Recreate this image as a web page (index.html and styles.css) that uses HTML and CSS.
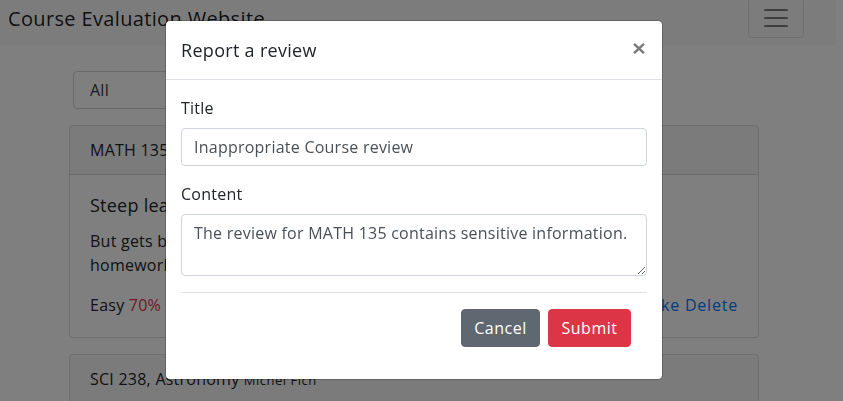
FILE: index.html
```html
<!DOCTYPE html>
<html lang="en">
<head>
<meta charset="utf-8">
<title>Course Evaluation Website</title>
<link rel="stylesheet" href="styles.css">
</head>
<body>
<nav class="navbar">
  <span class="brand">Course Evaluation Website</span>
  <button class="toggler" type="button" aria-label="Toggle navigation">
    <svg class="toggler-icon" width="30" height="30" viewBox="0 0 30 30"><path d="M4 7h22M4 15h22M4 23h22" stroke="rgba(0,0,0,0.5)" stroke-width="2" stroke-linecap="round" fill="none"/></svg>
  </button>
</nav>

<main class="page">
  <select class="filter"><option>All</option></select>

  <div class="card">
    <div class="card-header">MATH 135, Algebra for Honours Mathematics <small class="prof">Ross Willard</small></div>
    <div class="card-body">
      <h5 class="card-title">Steep learning curve</h5>
      <p class="card-text">But gets better after the first few weeks, as long as you keep up<br>homework every week.</p>
      <div class="meta">
        <span>Easy <span class="pct">70%</span></span>
        <span class="links"><a href="#" class="link">Like</a> <a href="#" class="link">Delete</a></span>
      </div>
    </div>
  </div>

  <div class="card">
    <div class="card-header">SCI 238, Astronomy <small class="prof">Michel Fich</small></div>
    <div class="card-body">
      <h5 class="card-title">Interesting course</h5>
    </div>
  </div>
</main>

<div class="backdrop"></div>

<div class="modal" role="dialog">
  <div class="modal-header">
    <h5 class="modal-title">Report a review</h5>
    <button class="close" type="button" aria-label="Close">
      <svg width="12" height="11" viewBox="0 0 12 11"><path d="M1 0.8L11 10.2M11 0.8L1 10.2" stroke="#7b7b7b" stroke-width="2.4" fill="none"/></svg>
    </button>
  </div>
  <form class="modal-body">
    <div class="form-group">
      <label class="label">Title</label>
      <input class="input" type="text" value="Inappropriate Course review">
    </div>
    <div class="form-group">
      <label class="label">Content</label>
      <textarea class="input textarea" rows="2">The review for MATH 135 contains sensitive information.</textarea>
    </div>
    <div class="modal-footer">
      <button type="button" class="btn btn-secondary">Cancel</button>
      <button type="button" class="btn btn-danger">Submit</button>
    </div>
  </form>
</div>
</body>
</html>
```

FILE: styles.css
```css
html, body {
  margin: 0;
  height: 100%;
}

body {
  font-family: "Open Sans", "Noto Sans", sans-serif;
  font-size: 16px;
  line-height: 1.5;
  color: #212529;
  background: #fff;
  letter-spacing: 0.24px;
  overflow: hidden;
}

/* Navbar */
.navbar {
  width: 836px;
  height: 46px;
  box-sizing: border-box;
  background: #f8f9fa;
  display: flex;
  justify-content: space-between;
  align-items: flex-start;
  padding: 0 32px 0 8px;
}

.brand {
  font-size: 20px;
  line-height: 28px;
  padding-top: 5px;
  letter-spacing: 0.35px;
  color: rgba(0, 0, 0, 0.9);
}

.toggler {
  width: 56px;
  height: 40px;
  margin-top: -2px;
  padding: 0;
  border: 1px solid rgba(0, 0, 0, 0.1);
  border-radius: 4px;
  background: transparent;
  display: flex;
  align-items: center;
  justify-content: center;
}

.toggler-icon {
  display: block;
}

/* Page content */
.page {
  width: 690px;
  margin-left: 69px;
  padding-top: 25px;
}

.filter {
  display: block;
  width: 300px;
  height: 38px;
  margin: 0 0 16px 4px;
  padding: 0 16px;
  font: inherit;
  letter-spacing: inherit;
  color: #343a40;
  background: #fff;
  border: 1px solid #ced4da;
  border-radius: 4px;
  appearance: none;
  -webkit-appearance: none;
}

.card {
  background: #fff;
  border: 1px solid rgba(0, 0, 0, 0.125);
  border-radius: 4px;
  margin-bottom: 16px;
}

.card-header {
  padding: 12px 20px;
  background: rgba(0, 0, 0, 0.03);
  border-bottom: 1px solid rgba(0, 0, 0, 0.125);
}

.prof {
  font-size: 13px;
  letter-spacing: 0.5px;
}

.card-body {
  padding: 20px;
}

.card-title {
  font-size: 18px;
  line-height: 21.6px;
  font-weight: 400;
  margin: 0 0 12px;
}

.card-text {
  margin: 0 0 16px;
}

.meta {
  display: flex;
  justify-content: space-between;
}

.pct {
  color: #dc3545;
}

.links {
  letter-spacing: 0.8px;
}

.link {
  color: #007bff;
  text-decoration: none;
}

/* Modal */
.backdrop {
  position: fixed;
  inset: 0;
  background: rgba(0, 0, 0, 0.5);
}

.modal {
  position: fixed;
  left: 165px;
  top: 20px;
  width: 498px;
  box-sizing: border-box;
  background: #fff;
  background-clip: padding-box;
  border: 1px solid rgba(0, 0, 0, 0.2);
  border-radius: 5px;
}

.modal-header {
  display: flex;
  justify-content: space-between;
  align-items: flex-start;
  padding: 16px 17px 16px 15px;
  border-bottom: 1px solid #dee2e6;
}

.modal-title {
  margin: 0;
  font-size: 18px;
  line-height: 26px;
  font-weight: 400;
  letter-spacing: 0.3px;
}

.close {
  margin-top: 6px;
  padding: 0;
  border: 0;
  background: transparent;
  display: block;
  line-height: 0;
}

.modal-body {
  display: block;
  padding: 16px 15px;
}

.form-group {
  margin-bottom: 16px;
}

.label {
  display: block;
  margin-bottom: 8px;
}

.input {
  display: block;
  width: 100%;
  box-sizing: border-box;
  height: 38px;
  margin: 0;
  padding: 6px 12px;
  font: inherit;
  letter-spacing: inherit;
  color: #495057;
  background: #fff;
  border: 1px solid #ced4da;
  border-radius: 4px;
}

.textarea {
  height: 62px;
  resize: vertical;
}

.modal-footer {
  display: flex;
  justify-content: flex-end;
  gap: 8px;
  padding: 16px;
  border-top: 1px solid #dee2e6;
}

.btn {
  font: inherit;
  letter-spacing: 0.5px;
  line-height: 24px;
  padding: 6px 0;
  border: 1px solid transparent;
  border-radius: 4px;
  color: #fff;
  text-align: center;
}

.btn-secondary {
  width: 79px;
  background: #5f6870;
  border-color: #5f6870;
}

.btn-danger {
  width: 83px;
  background: #dc3545;
  border-color: #dc3545;
}
```
